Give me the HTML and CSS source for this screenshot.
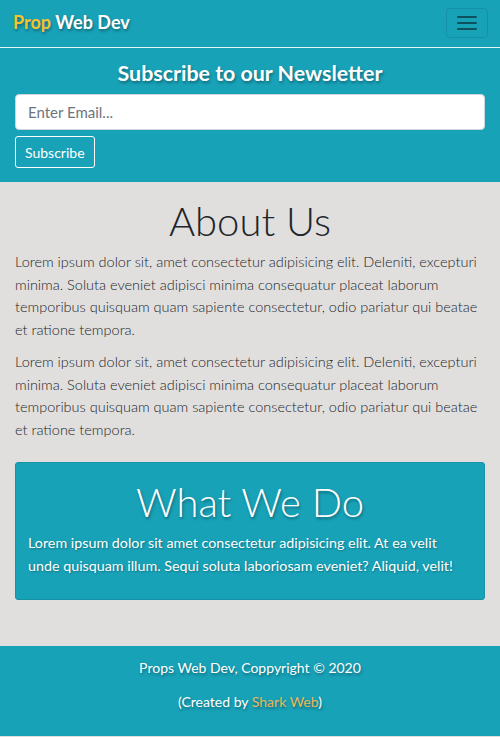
FILE: index.html
```html
<!DOCTYPE html>
<html lang="en">
<head>
<meta charset="utf-8">
<title>Prop Web Dev</title>
<link rel="stylesheet" href="styles.css">
</head>
<body>
<header class="navbar">
  <a class="brand" href="#"><span class="brand-accent">Prop</span> Web Dev</a>
  <button class="toggler" aria-label="Toggle navigation">
    <svg width="22" height="16" viewBox="0 0 22 16"><path d="M2 2h18M2 8h18M2 14h18" stroke="rgba(0,0,0,0.5)" stroke-width="2" stroke-linecap="round"/></svg>
  </button>
</header>
<section class="newsletter">
  <h2 class="newsletter-title">Subscribe to our Newsletter</h2>
  <input class="email" type="text" placeholder="Enter Email...">
  <button class="subscribe">Subscribe</button>
</section>
<main class="main">
  <h1 class="about-title">About Us</h1>
  <p class="para">Lorem ipsum dolor sit, amet consectetur adipisicing elit. Deleniti, excepturi minima. Soluta eveniet adipisci minima consequatur placeat laborum temporibus quisquam quam sapiente consectetur, odio pariatur qui beatae et ratione tempora.</p>
  <p class="para">Lorem ipsum dolor sit, amet consectetur adipisicing elit. Deleniti, excepturi minima. Soluta eveniet adipisci minima consequatur placeat laborum temporibus quisquam quam sapiente consectetur, odio pariatur qui beatae et ratione tempora.</p>
  <div class="card">
    <h1 class="card-title">What We Do</h1>
    <p class="card-text">Lorem ipsum dolor sit amet consectetur adipisicing elit. At ea velit unde quisquam illum. Sequi soluta laboriosam eveniet? Aliquid, velit!</p>
  </div>
</main>
<footer class="footer">
  <p class="foot-line">Props Web Dev, Coppyright &copy; 2020</p>
  <p class="foot-line">(Created by <span class="foot-accent">Shark Web</span>)</p>
</footer>
</body>
</html>
```
FILE: styles.css
```css
* { box-sizing: border-box; }
body {
  margin: 0;
  font-family: Lato, "Open Sans", sans-serif;
  background: #e0dfde;
  color: #212529;
}
.navbar {
  background: #18a2b8;
  height: 48px;
  display: flex;
  align-items: center;
  justify-content: space-between;
  padding: 0 12px 0 13px;
  border-bottom: 1px solid #e6f6f8;
}
.brand {
  color: #fff;
  text-decoration: none;
  font-weight: 700;
  font-size: 18px;
  text-shadow: 1px 2px 3px rgba(0,0,0,0.35);
  margin-top: -4px;
}
.brand-accent { color: #f3c330; }
.toggler {
  width: 42px;
  height: 30px;
  background: transparent;
  border: 1px solid rgba(0,0,0,0.1);
  border-radius: 4px;
  display: flex;
  align-items: center;
  justify-content: center;
  padding: 0;
  margin-top: -1px;
}
.newsletter {
  background: #18a2b8;
  padding: 10px 15px 14px;
  display: flex;
  flex-direction: column;
  align-items: flex-start;
}
.newsletter-title {
  align-self: stretch;
  text-align: center;
  color: #fff;
  font-size: 21.4px;
  font-weight: 700;
  margin: 0 0 6px;
  line-height: 30px;
  text-shadow: 1px 2px 3px rgba(0,0,0,0.35);
}
.email {
  width: 100%;
  height: 36px;
  border: 1px solid #ced4da;
  border-radius: 4px;
  padding: 0 12px;
  font-family: inherit;
  font-size: 15px;
  color: #495057;
}
.email::placeholder { color: #6c757d; }
.subscribe {
  margin-top: 6px;
  height: 32px;
  padding: 0 9px;
  background: transparent;
  color: #fff;
  border: 1px solid #fff;
  border-radius: 3px;
  font-family: inherit;
  font-size: 14px;
}
.main {
  padding: 13px 15px 46px;
}
.about-title {
  margin: 0 0 4px;
  text-align: center;
  font-weight: 300;
  font-size: 40px;
  line-height: 52px;
}
.para {
  margin: 0 0 10px;
  font-size: 14.5px;
  font-weight: 300;
  line-height: 22.5px;
}
.card {
  margin-top: 21px;
  background: #18a2b8;
  border: 1px solid #1592a6;
  border-radius: 3px;
  padding: 13px 24px 22px 12px;
  color: #fff;
  text-shadow: 1px 1px 2px rgba(0,0,0,0.3);
}
.card-title {
  margin: 0 -12px 4px 0;
  text-align: center;
  font-weight: 300;
  font-size: 40px;
  line-height: 52px;
  text-shadow: 1px 2px 3px rgba(0,0,0,0.35);
}
.card-text {
  margin: 0;
  font-size: 14.3px;
  line-height: 22.5px;
}
.footer {
  background: #18a2b8;
  padding: 10px 15px 22px;
  text-align: center;
  color: #fff;
  text-shadow: 1px 2px 3px rgba(0,0,0,0.35);
}
.foot-line {
  margin: 0 0 10px;
  font-size: 14px;
  line-height: 24px;
}
.foot-line:last-child { margin-bottom: 0; }
.foot-accent { color: #e8b75a; }
```
